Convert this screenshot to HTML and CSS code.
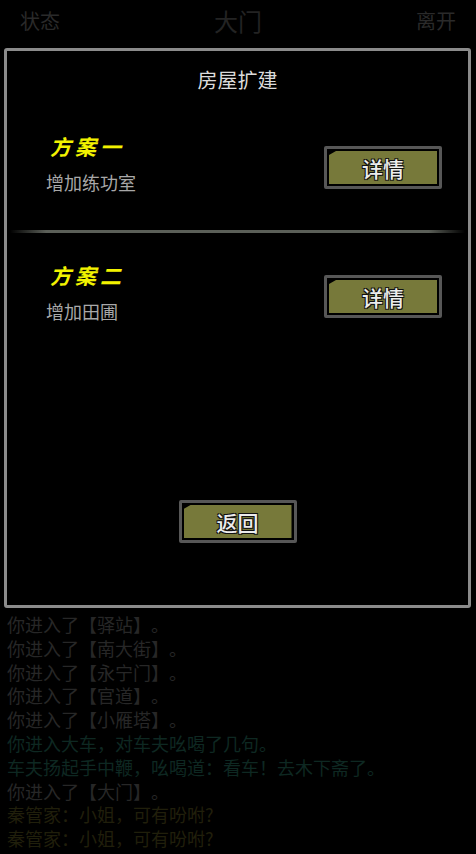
FILE: index.html
```html
<!DOCTYPE html>
<html lang="zh-CN">
<head>
    <meta charset="UTF-8">
    <meta name="viewport" content="width=device-width, initial-scale=1.0">
    <title>大门</title>
    <link rel="stylesheet" href="styles.css">
</head>
<body>

<div class="top-bar">
    <span class="top-side">状态</span>
    <span class="top-title">大门</span>
    <span class="top-side">离开</span>
</div>

<div class="panel">
    <div class="panel-title">房屋扩建</div>

    <div class="plan">
        <div class="plan-info">
            <div class="plan-name">方案一</div>
            <div class="plan-desc">增加练功室</div>
        </div>
        <div class="btn"><span>详情</span></div>
    </div>

    <div class="divider"></div>

    <div class="plan">
        <div class="plan-info">
            <div class="plan-name">方案二</div>
            <div class="plan-desc">增加田圃</div>
        </div>
        <div class="btn"><span>详情</span></div>
    </div>

    <div class="panel-footer">
        <div class="btn"><span>返回</span></div>
    </div>
</div>

<div class="log">
    <p class="gray">你进入了【驿站】。</p>
    <p class="gray">你进入了【南大街】。</p>
    <p class="gray">你进入了【永宁门】。</p>
    <p class="gray">你进入了【官道】。</p>
    <p class="gray">你进入了【小雁塔】。</p>
    <p class="green">你进入大车，对车夫吆喝了几句。</p>
    <p class="green">车夫扬起手中鞭，吆喝道：看车！去木下斋了。</p>
    <p class="gray">你进入了【大门】。</p>
    <p class="olive">秦管家：小姐，可有吩咐?</p>
    <p class="olive">秦管家：小姐，可有吩咐?</p>
</div>

</body>
</html>
```

FILE: styles.css
```css
body {
    margin: 0;
    padding: 0;
    height: 854px;
    overflow: hidden;
    background-color: black;
    font-family: "Noto Sans CJK SC", "Noto Sans", sans-serif;
    text-spacing-trim: space-all;
}

.top-bar {
    height: 48px;
    display: flex;
    justify-content: space-between;
    align-items: center;
    padding: 0 20px 6px 20px;
    box-sizing: border-box;
}

.top-side {
    font-size: 20px;
    color: #2a2a2a;
    line-height: 24px;
}

.top-title {
    font-size: 24px;
    color: #232323;
    line-height: 28px;
}

.panel {
    margin-left: 4px;
    width: 467px;
    height: 560px;
    box-sizing: border-box;
    border: 3px solid #8b8b8b;
    border-radius: 3px;
    display: flex;
    flex-direction: column;
    padding-top: 17px;
}

.panel-title {
    text-align: center;
    font-size: 20px;
    line-height: 24px;
    color: #dcdcdc;
    margin-bottom: 41px;
}

.plan {
    display: flex;
    justify-content: space-between;
    align-items: flex-start;
    padding: 0 26px 0 39px;
}

.plan-name {
    font-size: 21px;
    line-height: 26px;
    font-weight: bold;
    color: #f2f200;
    letter-spacing: 4px;
    padding-left: 4px;
    font-style: italic;
}

.plan-desc {
    margin-top: 12px;
    font-size: 18px;
    line-height: 22px;
    color: #a8a8a8;
}

.btn {
    width: 118px;
    height: 43px;
    box-sizing: border-box;
    border: 3px solid #575757;
    border-radius: 2px;
    padding: 2px;
    margin-top: 13px;
    background-color: black;
}

.btn span {
    display: flex;
    justify-content: center;
    align-items: center;
    height: 100%;
    background-color: #77793a;
    clip-path: polygon(7px 0, 100% 0, 100% 100%, 0 100%, 0 4px);
    font-size: 21px;
    font-weight: 500;
    color: #ececec;
    text-shadow: 1px 1px 0 #111, -1px -1px 0 #111, 1px -1px 0 #111, -1px 1px 0 #111;
}

.divider {
    height: 3px;
    margin: 37px 3px 29px 3px;
    background: linear-gradient(to right, transparent, #5b5f58 8%, #5b5f58 92%, transparent);
}

.panel-footer {
    margin-top: auto;
    padding-bottom: 62px;
    display: flex;
    justify-content: center;
}

.log {
    padding: 5px 0 0 7px;
}

.log p {
    margin: 0;
    font-size: 18px;
    line-height: 23.8px;
    white-space: nowrap;
}

.gray {
    color: #272727;
}

.green {
    color: #0e2822;
}

.olive {
    color: #201f0b;
}
```
